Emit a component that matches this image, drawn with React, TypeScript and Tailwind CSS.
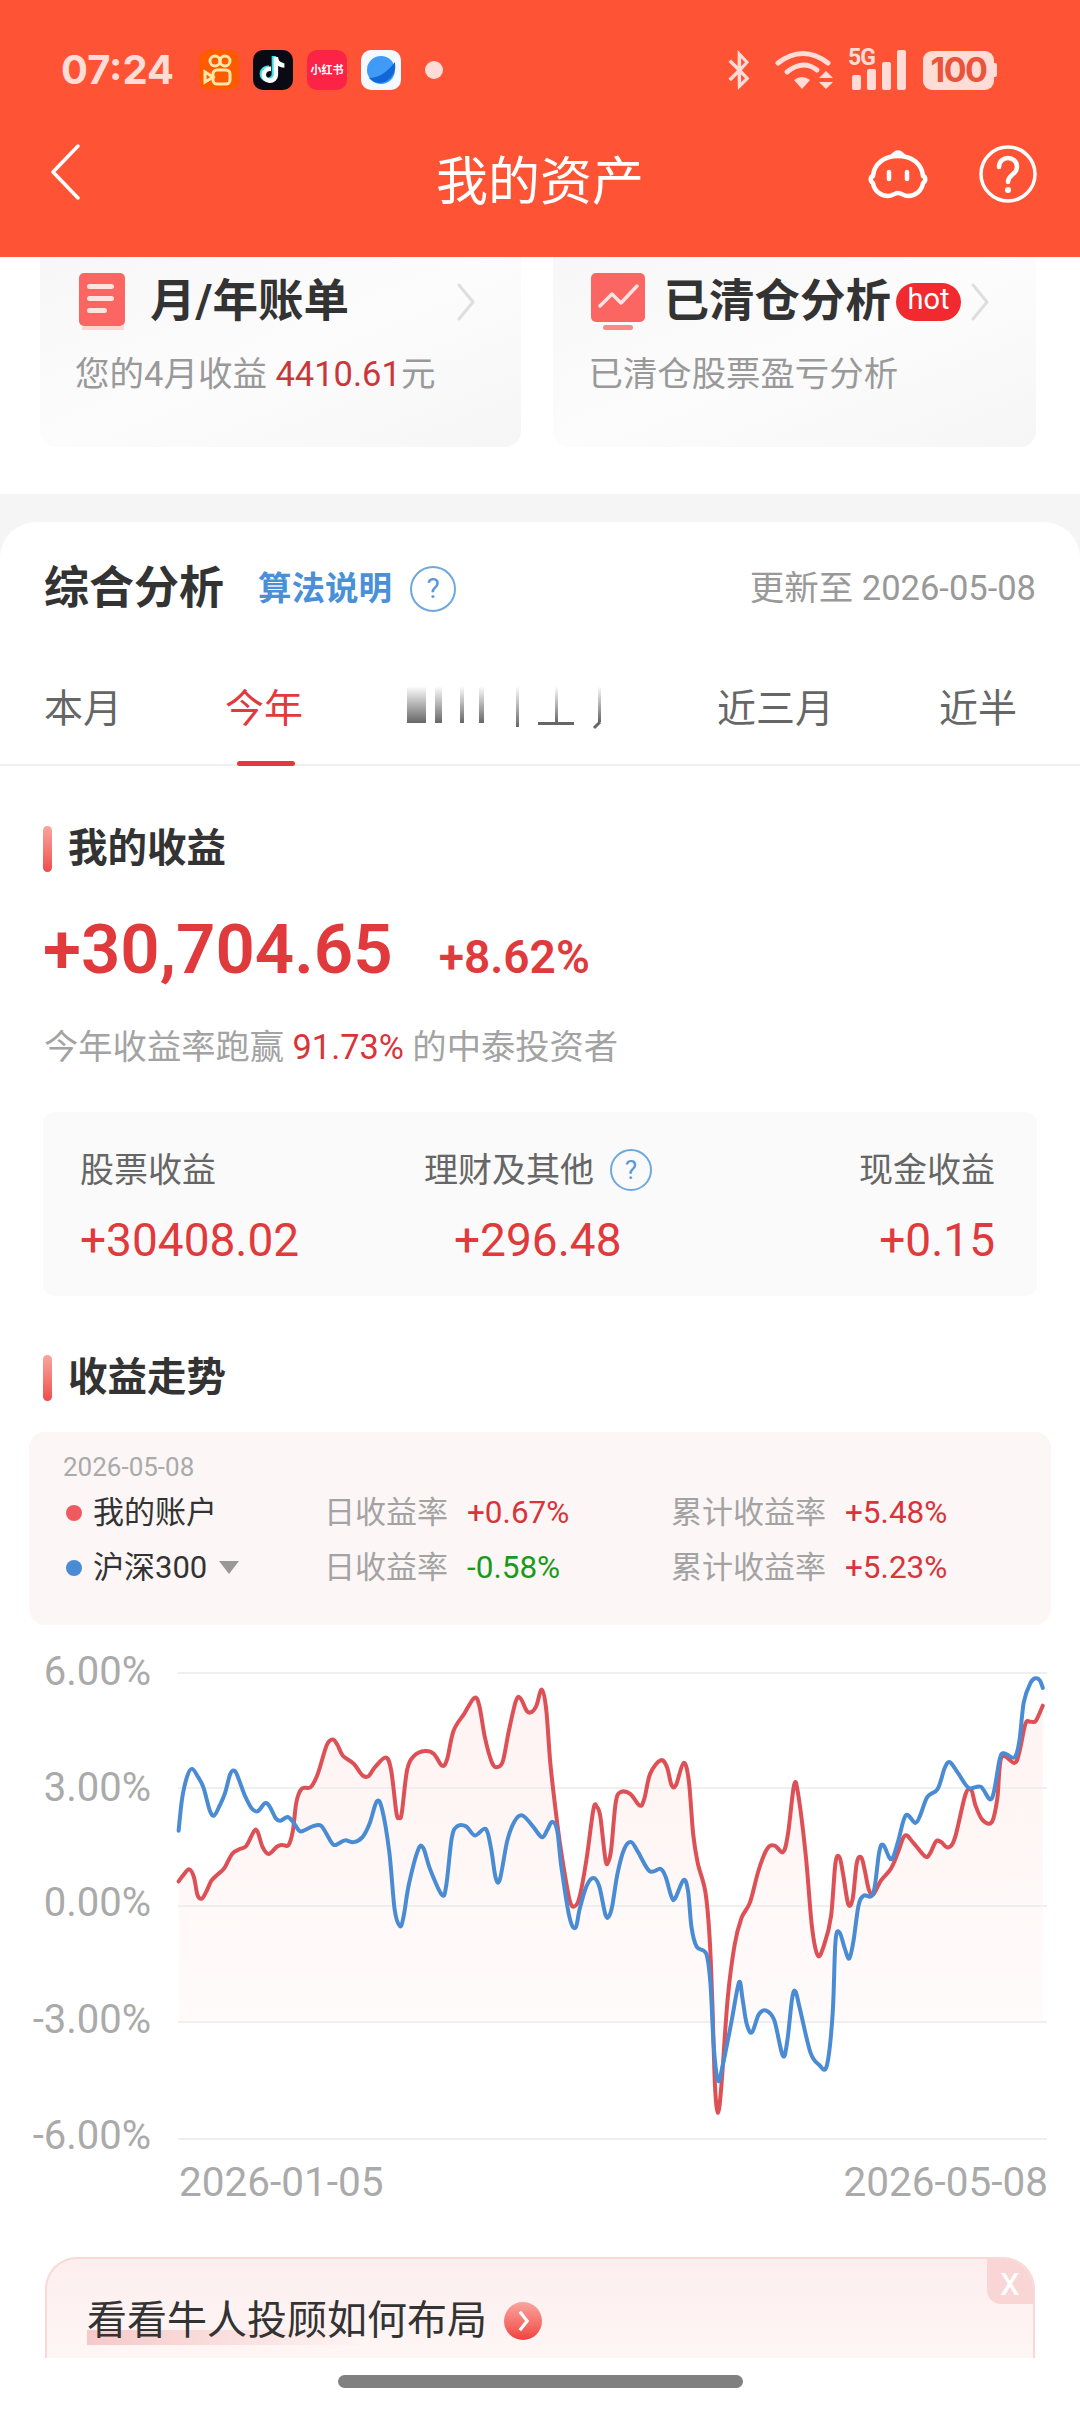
import { FaBluetoothB, FaTiktok } from 'react-icons/fa';

const toLeft = (p: number[][]) => p.map(([x, y]) => [x / 2.8, 1620 + y / 2.8]);
const toRight = (p: number[][]) => p.map(([x, y]) => [540 + x / 2.904, 1620 + y / 2.8]);

// traced from the reference, in crop pixels
const redPts = [
  ...toLeft([[500,732],[515,712],[530,698],[543,720],[553,770],[565,780],[578,760],[592,730],[610,712],[628,695],[650,655],[670,642],[690,632],[712,590],[722,595],[735,635],[752,655],[775,635],[790,630],[808,630],[820,590],[830,510],[845,472],[870,468],[890,430],[915,350],[932,335],[945,350],[960,380],[990,402],[1015,435],[1032,437],[1050,412],[1080,385],[1095,420],[1110,540],[1118,553],[1125,540],[1140,420],[1160,380],[1190,367],[1215,375],[1238,408],[1252,390],[1270,310],[1300,262],[1328,218],[1342,240],[1358,330],[1378,400],[1392,412],[1408,395],[1425,310],[1445,225],[1458,220],[1475,255],[1488,258],[1502,240]]),
  ...toRight([[5,195],[18,250],[30,400],[45,530],[60,640],[85,780],[100,802],[115,775],[135,670],[155,530],[165,523],[175,550],[190,670],[198,678],[207,640],[220,510],[235,482],[262,487],[290,520],[303,500],[320,430],[350,393],[368,410],[382,462],[395,462],[417,400],[432,450],[445,600],[458,680],[480,760],[492,880],[500,1060],[508,1300],[517,1380],[527,1300],[545,1060],[565,910],[585,835],[610,790],[635,700],[660,640],[682,632],[706,650],[720,600],[738,462],[750,490],[772,660],[790,860],[807,940],[825,910],[845,830],[858,680],[870,665],[880,710],[895,795],[908,780],[920,680],[933,665],[943,700],[955,755],[968,768],[990,730],[1020,695],[1040,650],[1060,603],[1085,625],[1118,662],[1132,655],[1150,620],[1165,622],[1185,637],[1205,610],[1235,490],[1252,475],[1265,520],[1285,560],[1312,566],[1328,500],[1340,385],[1378,400],[1392,370],[1410,290],[1425,285],[1440,282],[1460,240]]),
];

const bluePts = [
  ...toLeft([[500,590],[510,500],[525,435],[538,417],[555,440],[570,470],[588,535],[600,547],[615,520],[630,485],[645,430],[658,423],[670,450],[685,490],[705,528],[722,535],[742,513],[755,522],[772,555],[785,562],[805,552],[820,565],[838,590],[850,590],[875,578],[898,575],[915,600],[935,630],[965,617],[990,622],[1015,608],[1035,570],[1055,508],[1070,530],[1090,650],[1105,810],[1120,857],[1130,830],[1145,740],[1170,645],[1185,638],[1205,700],[1238,770],[1250,740],[1265,610],[1280,578],[1305,578],[1330,603],[1360,585],[1375,640],[1388,722],[1400,725],[1420,620],[1440,565],[1462,547],[1490,575]]),
  ...toRight([[5,608],[20,590],[35,565],[50,590],[62,690],[85,830],[103,862],[115,810],[135,745],[155,722],[172,745],[190,825],[200,830],[210,800],[225,710],[245,640],[265,622],[285,650],[318,703],[350,697],[365,720],[382,775],[392,780],[417,728],[430,760],[440,860],[455,915],[483,935],[495,1020],[505,1200],[517,1290],[530,1250],[555,1130],[578,1015],[588,1060],[600,1130],[615,1155],[635,1105],[655,1093],[680,1120],[705,1220],[718,1180],[732,1060],[742,1040],[755,1090],[785,1210],[810,1245],[833,1248],[850,1100],[858,900],[870,875],[885,920],[898,948],[910,900],[925,800],[940,772],[968,765],[985,650],[997,630],[1020,670],[1040,620],[1062,547],[1090,568],[1105,545],[1125,495],[1155,473],[1175,415],[1190,398],[1215,430],[1245,470],[1280,467],[1312,500],[1335,390],[1348,373],[1378,385],[1392,340],[1405,230],[1425,175],[1440,163],[1452,170],[1460,190]]),
];

function smooth(pts: number[][]) {
  let d = `M${pts[0][0].toFixed(1)} ${pts[0][1].toFixed(1)}`;
  for (let i = 0; i < pts.length - 1; i++) {
    const p0 = pts[i - 1] ?? pts[i];
    const p1 = pts[i];
    const p2 = pts[i + 1];
    const p3 = pts[i + 2] ?? p2;
    const c1x = p1[0] + (p2[0] - p0[0]) / 6;
    const c1y = p1[1] + (p2[1] - p0[1]) / 6;
    const c2x = p2[0] - (p3[0] - p1[0]) / 6;
    const c2y = p2[1] - (p3[1] - p1[1]) / 6;
    d += `C${c1x.toFixed(1)} ${c1y.toFixed(1)} ${c2x.toFixed(1)} ${c2y.toFixed(1)} ${p2[0].toFixed(1)} ${p2[1].toFixed(1)}`;
  }
  return d;
}

const redLine = smooth(redPts);
const blueLine = smooth(bluePts);
const lastRed = redPts[redPts.length - 1];

const yTicks = [
  { label: '6.00%', text: 1685, line: 1673 },
  { label: '3.00%', text: 1801, line: 1788 },
  { label: '0.00%', text: 1916, line: 1906 },
  { label: '-3.00%', text: 2033, line: 2022 },
  { label: '-6.00%', text: 2149, line: 2139 },
];

function TrendChart() {
  return (
    <svg viewBox="0 1640 1080 570" className="block h-[570px] w-[1080px]">
      <defs>
        <linearGradient id="areaFill" x1="0" y1="0" x2="0" y2="1">
          <stop offset="0" stopColor="#fef3f2" />
          <stop offset="1" stopColor="#fffdfd" />
        </linearGradient>
      </defs>
      <path d={`${redLine}L${lastRed[0]} 2022L179 2022Z`} fill="url(#areaFill)" />
      {yTicks.map((t) => (
        <g key={t.label}>
          <line x1="178" x2="1047" y1={t.line} y2={t.line} stroke="#efefef" strokeWidth="2" />
          <text x="151" y={t.text} textAnchor="end" fontSize="40" fill="#aaaaaa" fontFamily="Roboto, sans-serif">
            {t.label}
          </text>
        </g>
      ))}
      <path d={redLine} fill="none" stroke="#dd5056" strokeWidth="4" strokeLinecap="round" />
      <path d={blueLine} fill="none" stroke="#4a8cd4" strokeWidth="4" strokeLinecap="round" />
      <text x="179" y="2196" fontSize="40.5" fill="#aaaaaa" fontFamily="Roboto, sans-serif">
        2026-01-05
      </text>
      <text x="1048" y="2196" textAnchor="end" fontSize="40.5" fill="#aaaaaa" fontFamily="Roboto, sans-serif">
        2026-05-08
      </text>
    </svg>
  );
}

function StatusBar() {
  return (
    <div className="flex h-[140px] items-center pb-0 pl-[61px] text-[#ffdcd6]">
      <span className="w-[138px] font-['Inter'] text-[40px] leading-none font-bold">07:24</span>
      <div className="flex items-center gap-[14px]">
        <div className="flex size-[40px] items-center justify-center rounded-[10px] bg-[#ff5a00]">
          <svg viewBox="0 0 40 40" className="size-[40px]" fill="none" stroke="#ffe7a8" strokeWidth="3">
            <circle cx="16" cy="11" r="5" />
            <circle cx="26" cy="11" r="5" />
            <rect x="14" y="20" width="17" height="14" rx="4" />
            <path d="M14 27 L6 22 V32 Z" />
          </svg>
        </div>
        <div className="flex size-[40px] items-center justify-center rounded-[10px] bg-[#0a0a14]">
          <FaTiktok className="size-[26px] text-white drop-shadow-[-1.5px_-1px_0_#35e0e8]" />
        </div>
        <div className="flex size-[40px] items-center justify-center rounded-[10px] bg-[#fb2447] text-[11px] leading-none font-bold whitespace-nowrap text-white">
          小红书
        </div>
        <div className="flex size-[40px] items-center justify-center rounded-[10px] bg-[#f4f9ff]">
          <svg viewBox="0 0 40 40" className="size-[40px]">
            <circle cx="20" cy="20" r="14" fill="#3f9bf5" />
            <path d="M8 28 Q22 28 34 12 Q36 24 26 31 Q16 36 8 28Z" fill="#1166d8" />
          </svg>
        </div>
        <span className="ml-[10px] size-[18px] rounded-full bg-[#ffdcd6]" />
      </div>
      <div className="ml-auto flex items-center pr-[83px]">
        <FaBluetoothB className="h-[40px] w-[26px]" />
        <svg viewBox="0 0 58 40" className="ml-[23px] h-[40px] w-[58px]" fill="none" stroke="currentColor" strokeWidth="5" strokeLinecap="round">
          <path d="M3 13 Q28 -6 53 13" />
          <path d="M12 22 Q28 9 42 20" />
          <path d="M27 39 L19 30 Q27 24 35 30Z" fill="currentColor" stroke="none" />
          <path d="M51 21 L58 28 H44Z M44 32 H58 L51 39Z" fill="currentColor" stroke="none" />
        </svg>
        <div className="relative ml-[15px] h-[40px] w-[58px]">
          <span className="absolute top-[-3px] left-0 font-['Roboto'] text-[23px] leading-[22px] font-bold tracking-[-1px]">5G</span>
          <div className="absolute right-0 bottom-0 flex items-end gap-[6px]">
            <span className="h-[15px] w-[9px] rounded-[2px] bg-[#ffdcd6]" />
            <span className="h-[21px] w-[9px] rounded-[2px] bg-[#ffdcd6]" />
            <span className="h-[28px] w-[9px] rounded-[2px] bg-[#ffdcd6]" />
            <span className="h-[40px] w-[9px] rounded-[2px] bg-[#ffdcd6]" />
          </div>
        </div>
        <div className="ml-[17px] flex items-center">
          <div className="flex h-[39px] w-[71px] items-center justify-center rounded-[9px] bg-[#ffdcd6] font-['Inter'] text-[34px] leading-none font-bold tracking-[-1.5px] text-[#e9543a]">
            100
          </div>
          <span className="h-[14px] w-[3px] rounded-r-[2px] bg-[#ffdcd6]" />
        </div>
      </div>
    </div>
  );
}

function NavBar() {
  return (
    <div className="flex h-[117px] items-start justify-between pr-[43px] pl-[50px] text-white">
      <svg viewBox="0 0 30 56" className="mt-[4px] h-[56px] w-[30px]" fill="none" stroke="currentColor" strokeWidth="3.5" strokeLinecap="round" strokeLinejoin="round">
        <path d="M28 2 L3 28 L28 54" />
      </svg>
      <span className="pl-[132px] text-[52px] leading-[86px]">我的资产</span>
      <div className="flex items-start gap-[51px]">
        <svg viewBox="0 0 60 52" className="mt-[7px] h-[52px] w-[60px]" fill="none" stroke="currentColor" strokeWidth="4.5" strokeLinejoin="round">
          <path d="M24 10 Q30 1 36 10" />
          <path d="M30 9 C16 9 6 17 5 29 C2 30 2 34 5 36 C6 44 13 49 20 49 C25 49 26 46 30 46 C34 46 35 49 40 49 C47 49 54 44 55 36 C58 34 58 30 55 29 C54 17 44 9 30 9Z" />
          <path d="M21 25 V32 M39 25 V32" strokeLinecap="round" />
        </svg>
        <svg viewBox="0 0 58 58" className="mt-[5px] h-[58px] w-[58px]" fill="none" stroke="currentColor" strokeWidth="3.5" strokeLinecap="round">
          <circle cx="29" cy="29" r="27" />
          <path d="M20 22 C20 10 38 10 38 22 C38 30 29 29 29 37" strokeWidth="4.5" />
          <circle cx="29" cy="45" r="3" fill="currentColor" stroke="none" />
        </svg>
      </div>
    </div>
  );
}

function Chevron() {
  return (
    <svg viewBox="0 0 18 38" className="h-[38px] w-[18px] shrink-0" fill="none" stroke="#dedede" strokeWidth="3" strokeLinecap="round" strokeLinejoin="round">
      <path d="M2 2 L16 19 L2 36" />
    </svg>
  );
}

function HelpDot({ size }: { size: string }) {
  return (
    <span className={`flex items-center justify-center rounded-full border-2 border-[#6ea8dc] font-['Roboto'] text-[#5a97d6] ${size}`}>?</span>
  );
}

function SectionTitle({ title }: { title: string }) {
  return (
    <div className="ml-[43px] flex items-center">
      <span className="h-[46px] w-[9px] rounded-full bg-gradient-to-b from-[#f8a5a0] to-[#ee4a4a]" />
      <span className="ml-[16px] text-[39.5px] leading-[46px] font-bold text-[#333333]">{title}</span>
    </div>
  );
}

function LegendRow({ dot, name, arrow, day, dayClass, total }: { dot: string; name: string; arrow?: boolean; day: string; dayClass: string; total: string }) {
  return (
    <div className="flex h-[55px] items-center text-[31px] leading-none">
      <span className={`ml-[37px] size-[16px] rounded-full ${dot}`} />
      <span className="ml-[11px] flex w-[231px] items-center text-[#333333]">
        {name}
        {arrow && <span className="ml-[12px] h-0 w-0 border-x-[10px] border-t-[13px] border-x-transparent border-t-[#999999]" />}
      </span>
      <span className="w-[143px] text-[#a3a3a3]">日收益率</span>
      <span className={`w-[204px] text-[31.5px] ${dayClass}`}>{day}</span>
      <span className="w-[174px] text-[#a3a3a3]">累计收益率</span>
      <span className="text-[31.5px] text-[#d8343a]">{total}</span>
    </div>
  );
}

function BlurredTab() {
  return (
    <svg viewBox="0 0 210 44" className="h-[44px] w-[210px]">
      <defs>
        <linearGradient id="fadeBar" x1="0" y1="0" x2="0" y2="1">
          <stop offset="0" stopColor="#666666" stopOpacity="0" />
          <stop offset="1" stopColor="#666666" />
        </linearGradient>
      </defs>
      <rect x="1" y="0" width="19" height="37" fill="url(#fadeBar)" />
      <rect x="29" y="0" width="7" height="37" fill="url(#fadeBar)" />
      <rect x="54" y="0" width="4" height="37" fill="url(#fadeBar)" />
      <rect x="73" y="0" width="5" height="37" fill="url(#fadeBar)" />
      <rect x="110" y="0" width="3" height="41" fill="url(#fadeBar)" />
      <rect x="149" y="0" width="3" height="37" fill="url(#fadeBar)" />
      <rect x="132" y="36" width="36" height="3" fill="#666666" />
      <rect x="192" y="0" width="3" height="36" fill="url(#fadeBar)" />
      <path d="M194 36 L188 42" stroke="#666666" strokeWidth="3" />
    </svg>
  );
}

export default function App() {
  return (
    <div className="flex h-[2412px] w-[1080px] flex-col overflow-hidden bg-white font-['Roboto','Noto_Sans_CJK_SC',sans-serif]">
      <div className="h-[257px] shrink-0 bg-[#ff5335]">
        <StatusBar />
        <NavBar />
      </div>

      <div className="flex h-[237px] shrink-0 gap-[32px] pr-[44px] pb-[47px] pl-[40px]">
        <div className="flex-1 rounded-b-[16px] bg-gradient-to-br from-[#f7f7f7] via-[#fcfcfc] to-[#f6f6f6] pt-[16px] pr-[46px] pl-[35px]">
          <div className="flex h-[57px] items-center">
            <svg viewBox="0 0 48 57" className="ml-[4px] h-[57px] w-[48px]">
              <rect x="0" y="0" width="46" height="53" rx="5" fill="#fb6663" />
              <rect x="3" y="53" width="42" height="4" fill="#fcd5d3" />
              <rect x="8" y="11" width="27" height="5" rx="2.5" fill="#ffe3e0" />
              <rect x="8" y="23" width="27" height="5" rx="2.5" fill="#ffe3e0" />
              <rect x="8" y="35" width="20" height="5" rx="2.5" fill="#ffe3e0" />
            </svg>
            <span className="ml-[23px] text-[45.5px] leading-none font-bold whitespace-nowrap text-[#333333]">月/年账单</span>
            <span className="ml-auto"><Chevron /></span>
          </div>
          <div className="mt-[22px] text-[34.5px] leading-[44px] whitespace-nowrap text-[#999999]">
            您的4月收益 <span className="text-[#c9373b]">4410.61</span>元
          </div>
        </div>
        <div className="flex-1 rounded-b-[16px] bg-gradient-to-br from-[#f7f7f7] via-[#fcfcfc] to-[#f6f6f6] pt-[16px] pr-[46px] pl-[38px]">
          <div className="flex h-[57px] items-center">
            <svg viewBox="0 0 54 57" className="h-[57px] w-[54px] shrink-0">
              <rect x="0" y="0" width="54" height="49" rx="5" fill="#fb6663" />
              <rect x="12" y="52" width="30" height="5" rx="2.5" fill="#f98a87" />
              <path d="M9 33 L21 21 L30 30 L46 13" fill="none" stroke="#ffe3e0" strokeWidth="3.5" strokeLinecap="round" strokeLinejoin="round" />
            </svg>
            <span className="ml-[19px] text-[45.5px] leading-none font-bold whitespace-nowrap text-[#333333]">已清仓分析</span>
            <span className="ml-[5px] flex h-[38px] w-[65px] shrink-0 items-center justify-center rounded-full bg-[#f02a2f] pb-[4px] text-[29px] leading-none text-white">hot</span>
            <span className="ml-[10px]"><Chevron /></span>
          </div>
          <div className="mt-[22px] -ml-[2px] text-[34.4px] leading-[44px] whitespace-nowrap text-[#999999]">已清仓股票盈亏分析</div>
        </div>
      </div>

      <div className="shrink-0 bg-[#f5f5f5] pt-[28px]">
        <div className="rounded-t-[36px] bg-white">
          <div className="flex h-[134px] items-center px-[44px] pb-[1px]">
            <span className="text-[45px] leading-none font-bold text-[#333333]">综合分析</span>
            <span className="ml-[34px] text-[33.5px] leading-none font-bold text-[#4a90d9]">算法说明</span>
            <HelpDot size="ml-[18px] size-[46px] text-[28px]" />
            <span className="ml-auto text-[34.5px] leading-none text-[#999999]">更新至 2026-05-08</span>
          </div>
          <div className="flex h-[110px] items-start border-b-2 border-[#f0f0f0] pl-[44px] text-[39px] leading-[106px] text-[#666666]">
            <span className="w-[181px]">本月</span>
            <span className="relative h-full w-[180px] text-[#e4393c]">
              今年
              <span className="absolute bottom-[-2px] left-[12px] h-[5px] w-[58px] rounded-full bg-[#e4393c]" />
            </span>
            <span className="mt-[30px] w-[312px] pl-[1px]"><BlurredTab /></span>
            <span className="w-[222px]">近三月</span>
            <span className="whitespace-nowrap">近半</span>
          </div>

          <div className="pt-[60px]">
            <SectionTitle title="我的收益" />
            <div className="mt-[38px] flex items-baseline pl-[43px] text-[#e03a3c]">
              <span className="text-[69px] leading-[80px] font-semibold">+30,704.65</span>
              <span className="ml-[46px] text-[46px] leading-none font-semibold">+8.62%</span>
            </div>
            <div className="mt-[33px] pl-[44px] text-[34.3px] leading-[48px] whitespace-nowrap text-[#a3a3a3]">
              今年收益率跑赢 <span className="text-[#d8343a]">91.73%</span> 的中泰投资者
            </div>
          </div>

          <div className="mx-[43px] mt-[41px] flex h-[184px] rounded-[12px] bg-[#fafafa] pt-[36px] pr-[42px] pl-[37px]">
            <div className="w-[344px] shrink-0">
              <div className="text-[34px] leading-[44px] text-[#666666]">股票收益</div>
              <div className="mt-[26px] text-[46px] leading-[44px] text-[#e03a3c]">+30408.02</div>
            </div>
            <div className="flex-1">
              <div className="flex items-center text-[34px] leading-[44px] text-[#666666]">
                理财及其他
                <HelpDot size="ml-[16px] size-[42px] text-[26px]" />
              </div>
              <div className="mt-[26px] pl-[30px] text-[46px] leading-[44px] text-[#e03a3c]">+296.48</div>
            </div>
            <div className="text-right">
              <div className="text-[34px] leading-[44px] text-[#666666]">现金收益</div>
              <div className="mt-[26px] text-[46px] leading-[44px] text-[#e03a3c]">+0.15</div>
            </div>
          </div>

          <div className="pt-[59px]">
            <SectionTitle title="收益走势" />
          </div>

          <div className="mx-[29px] mt-[31px] h-[193px] rounded-[16px] bg-[#fcf6f6] pt-[18px]">
            <div className="pl-[34px] text-[26px] leading-[35px] text-[#aaaaaa]">2026-05-08</div>
            <LegendRow dot="bg-[#ee5a5e]" name="我的账户" day="+0.67%" dayClass="text-[#d8343a]" total="+5.48%" />
            <LegendRow dot="bg-[#4a8cd4]" name="沪深300" arrow day="-0.58%" dayClass="text-[#1a9a1a]" total="+5.23%" />
          </div>

          <div className="mt-[15px]">
            <TrendChart />
          </div>

          <div className="relative mx-[45px] mt-[47px] h-[101px] overflow-hidden rounded-t-[32px] border-x-2 border-t-2 border-[#f8d9d6] bg-gradient-to-b from-[#fdeeee] to-[#fef6f5] pt-[37px] pl-[40px]">
            <span className="absolute top-0 right-0 flex h-[45px] w-[46px] items-center justify-center rounded-bl-[14px] bg-[#f9d5d5] text-[40px] leading-none text-white">x</span>
            <div className="flex items-center">
              <span className="relative text-[40px] leading-[50px] text-[#333333]">
                <span className="absolute top-[34px] left-0 h-[15px] w-[280px] bg-gradient-to-r from-[#f6c9c9] to-transparent" />
                <span className="relative">看看牛人投顾如何布局</span>
              </span>
              <span className="ml-[17px] flex size-[38px] items-center justify-center rounded-full bg-gradient-to-b from-[#f9a39e] to-[#ee3f3f]">
                <svg viewBox="0 0 14 24" className="h-[22px] w-[13px]" fill="none" stroke="#ffffff" strokeWidth="3.5">
                  <path d="M3 2 L11 12 L3 22" />
                </svg>
              </span>
            </div>
          </div>

          <div className="flex h-[54px] items-start justify-center pt-[17px]">
            <span className="h-[13px] w-[405px] rounded-full bg-[#808080]" />
          </div>
        </div>
      </div>
    </div>
  );
}
